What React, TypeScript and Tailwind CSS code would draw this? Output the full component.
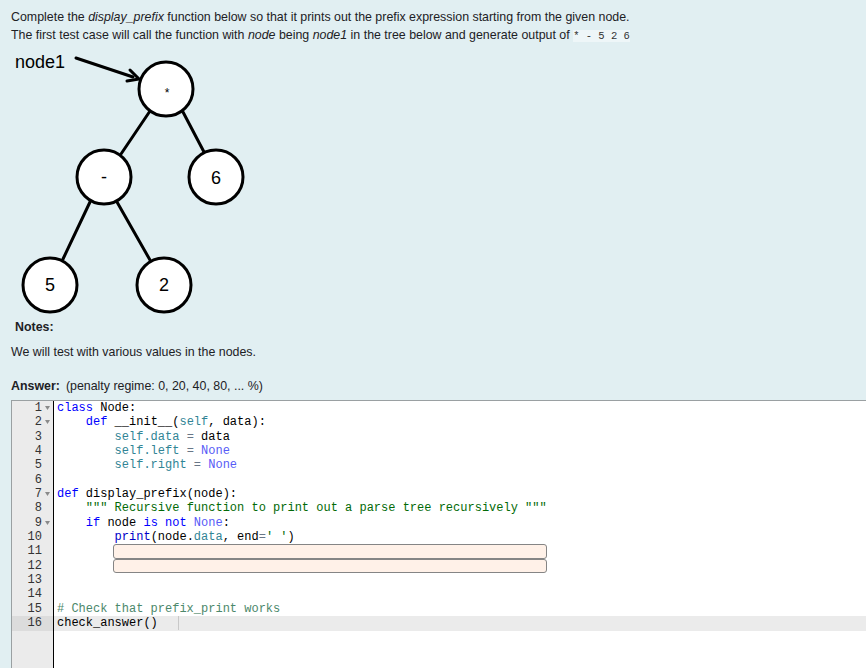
import React from "react";

type Seg = [string, string];

const K = "text-[#0000ff]";
const CN = "text-[#585cf6]";
const SL = "text-[#318495]";
const OP = "text-[#687687]";
const ST = "text-[#036a07]";
const CM = "text-[#4c886b]";
const PR = "text-[#0000c8]";
const TX = "text-[#000000]";

const lines: Seg[][] = [
  [["class", K], [" Node:", TX]],
  [["    ", TX], ["def", K], [" __init__(", TX], ["self", SL], [", data):", TX]],
  [["        ", TX], ["self.data", SL], [" ", TX], ["=", OP], [" data", TX]],
  [["        ", TX], ["self.left", SL], [" ", TX], ["=", OP], [" ", TX], ["None", CN]],
  [["        ", TX], ["self.right", SL], [" ", TX], ["=", OP], [" ", TX], ["None", CN]],
  [],
  [["def", K], [" display_prefix(node):", TX]],
  [["    ", TX], ['""" Recursive function to print out a parse tree recursively """', ST]],
  [["    ", TX], ["if", K], [" node ", TX], ["is", K], [" ", TX], ["not", K], [" ", TX], ["None", CN], [":", TX]],
  [["        ", TX], ["print", PR], ["(node.", TX], ["data", SL], [", end", TX], ["=", OP], ["' '", ST], [")", TX]],
  [],
  [],
  [],
  [],
  [["# Check that prefix_print works", CM]],
  [["check_answer()", TX]],
];

const folds = [1, 2, 7, 9];

function Fold() {
  return (
    <svg width="5" height="4" viewBox="0 0 5 4" className="mt-[5px]">
      <polygon points="0,0 5,0 2.5,4" fill="#8a8a8a" />
    </svg>
  );
}

export default function App() {
  return (
    <div
      className="min-h-screen w-full bg-[#e1eff2] text-[12.4px] text-[#1d2125] overflow-hidden"
      style={{ fontFamily: '"Liberation Sans", Arial, sans-serif' }}
    >
      <p className="pt-[8px] pl-[11px] leading-[18px]">
        Complete the <i>display_prefix</i> function below so that it prints out the prefix expression starting from the given node.
      </p>
      <p className="pl-[11px] leading-[18px]">
        The first test case will call the function with <i>node</i> being <i>node1</i> in the tree below and generate output of{" "}
        <code
          className="bg-[#eef6f8] text-[10.5px] text-[#333]"
          style={{ fontFamily: '"Liberation Mono", monospace' }}
        >
          * - 5 2 6
        </code>
      </p>
      <svg width="260" height="273" viewBox="0 44 260 273" className="block">
        <g stroke="#000" strokeWidth="3" fill="none" strokeLinecap="round">
          <line x1="150" y1="110" x2="121" y2="153" />
          <line x1="183" y1="111" x2="204" y2="151" />
          <line x1="90" y1="201" x2="63" y2="258" />
          <line x1="117" y1="201" x2="150" y2="259" />
          <line x1="76" y1="57" x2="133" y2="76" />
          <polyline points="127,80 139,78 130,69" strokeLinejoin="miter" />
        </g>
        <g fill="#fff" stroke="#000" strokeWidth="3">
          <circle cx="166" cy="88" r="27" />
          <circle cx="104" cy="176" r="27" />
          <circle cx="216" cy="176" r="27" />
          <circle cx="50" cy="284" r="27" />
          <circle cx="164" cy="284" r="27" />
        </g>
        <g fill="#000" style={{ fontFamily: '"Liberation Sans", Arial, sans-serif' }} textAnchor="middle">
          <text x="40" y="67" fontSize="18">node1</text>
          <text x="167" y="96" fontSize="12">*</text>
          <text x="104" y="182" fontSize="18">-</text>
          <text x="216" y="183" fontSize="18">6</text>
          <text x="50" y="290" fontSize="18">5</text>
          <text x="164" y="290" fontSize="18">2</text>
        </g>
      </svg>
      <p className="pl-[15px] leading-[18px] font-bold">Notes:</p>
      <p className="pl-[11px] mt-[7px] leading-[18px]">We will test with various values in the nodes.</p>
      <p className="pl-[11px] mt-[16px] leading-[18px]">
        <b>Answer:</b>
        <span className="ml-[6px]">(penalty regime: 0, 20, 40, 80, ... %)</span>
      </p>
      <div
        className="ml-[11px] mt-[5px] h-[280px] flex border-t border-l border-[#9aa0a2] text-[12px] leading-[14.35px]"
        style={{ fontFamily: '"Liberation Mono", "DejaVu Sans Mono", monospace' }}
      >
        <div className="w-[42px] shrink-0 bg-[#ebebeb] border-r border-black text-[#333]">
          {lines.map((_, i) => (
            <div
              key={i}
              className={
                i === 15
                  ? "h-[14.35px] flex justify-end bg-[#dcdcdc]"
                  : "h-[14.35px] flex justify-end"
              }
            >
              <span>{i + 1}</span>
              <span className="w-[11px] flex justify-center">
                {folds.includes(i + 1) ? <Fold /> : null}
              </span>
            </div>
          ))}
        </div>
        <div className="flex-1 bg-white">
          {lines.map((segs, i) => {
            if (i === 10 || i === 11) {
              return (
                <div key={i} className="h-[14.35px] pl-[59px]">
                  <div className="w-[434px] h-full border border-[#858585] rounded-[3px] bg-[#fff1e8]" />
                </div>
              );
            }
            return (
              <div
                key={i}
                className={
                  i === 15
                    ? "h-[14.35px] pl-[3px] whitespace-pre bg-[#ebebeb] flex"
                    : "h-[14.35px] pl-[3px] whitespace-pre flex"
                }
              >
                {segs.map(([t, c], j) => (
                  <span key={j} className={c}>
                    {t}
                  </span>
                ))}
                {i === 15 ? <span className="inline-block w-px h-[14px] bg-[#c8c8c8] ml-[20px]" /> : null}
              </div>
            );
          })}
        </div>
      </div>
    </div>
  );
}
